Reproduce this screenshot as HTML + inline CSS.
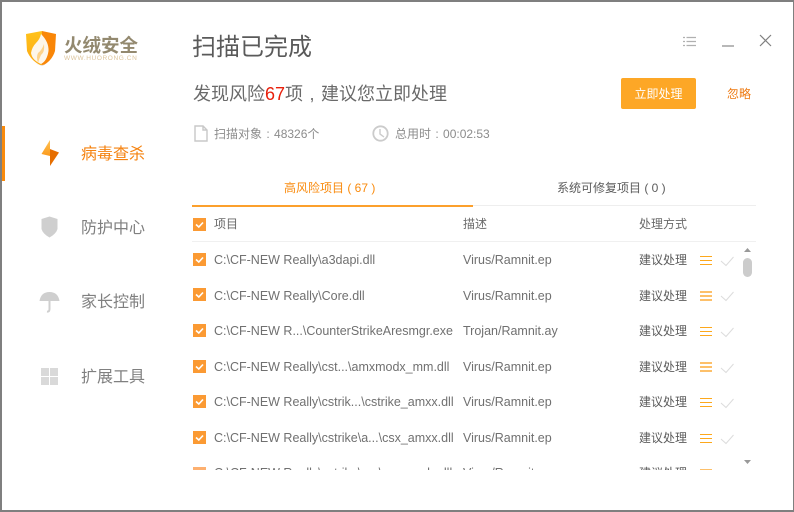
<!DOCTYPE html>
<html lang="zh"><head><meta charset="utf-8"><title>火绒安全</title>
<style>
html,body{margin:0;padding:0;background:#fff}
#w{position:relative;width:794px;height:512px;overflow:hidden;background:#fff;font-family:"Liberation Sans","Noto Sans CJK SC",sans-serif;color:#666}
.a{position:absolute;white-space:nowrap;line-height:1;filter:blur(.3px)}
.b{position:absolute;background:#7f7f7f}
.nav{left:81px;font-size:16px;color:#808080}
.cb{position:absolute;left:193px;width:13px;height:13px}
.p{left:214px;font-size:12.5px;color:#707070}
.v{left:463px;font-size:12.5px;color:#707070}
.s{left:639px;font-size:12px;color:#5c5c5c}
.ic{position:absolute;left:700px;width:40px;height:12px}
.c{display:inline-block;width:12px;text-align:center}
#list{position:absolute;left:0;top:0;width:794px;height:470px;overflow:hidden}
</style></head><body><div id="w">
<div class="b" style="left:0;top:0;width:794px;height:2px"></div>
<div class="b" style="left:0;top:0;width:2px;height:512px"></div>
<div class="b" style="right:0;top:0;width:1px;height:512px"></div>
<div class="b" style="left:0;bottom:0;width:794px;height:2px"></div>

<svg style="position:absolute;left:25px;top:30px;filter:blur(.3px)" width="32" height="37" viewBox="0 0 32 37">
<defs><linearGradient id="y" x1="0" y1="0" x2="0" y2="1"><stop offset="0" stop-color="#ffc21a"/><stop offset="1" stop-color="#fca814"/></linearGradient></defs>
<path d="M1 4 L17 1 V36 Q6 31 2 21Z" fill="url(#y)"/>
<path d="M17 1 L31 4 L30 21 Q27 31 17 36Z" fill="#f98607"/>
<path d="M16 4 Q24 12 23.500 21 Q22 31 16 34 Q7 30 6 23 Q7 17 11 13 Q15 9 16 4Z" fill="#fdf6ea"/>
<path d="M19 14 Q20 22 16 25 Q14 29 13 33 Q11 27 13 23 Q17 20 19 14Z" fill="#fdd28a"/>
<path d="M10 33 Q16 37 23 33 L17 36Z" fill="#e6e6e6"/>
</svg>
<div class="a" style="left:64px;top:37px;font-size:18.500px;font-weight:700;color:#93896f">火绒安全</div>
<div class="a" style="left:64px;top:56px;font-size:6.500px;color:#dcc49c;letter-spacing:.6px">WWW.HUORONG.CN</div>

<div class="b" style="left:2px;top:126px;width:3px;height:55px;background:#f98a0c"></div>
<svg style="position:absolute;left:40px;top:140px;filter:blur(.3px)" width="20" height="27" viewBox="0 0 20 27">
<defs><linearGradient id="g" x1="0" y1="0" x2="0" y2="1"><stop offset="0" stop-color="#ffc355"/><stop offset="1" stop-color="#fb9a1c"/></linearGradient></defs>
<path d="M10 0 L1.500 14 L10 16Z" fill="url(#g)"/>
<path d="M10 9 L19 12.500 L10 26Z" fill="#e66e00"/>
</svg>
<div class="a nav" style="top:147px;color:#f5820f">病毒查杀</div>

<svg style="position:absolute;left:41px;top:216px" width="17" height="22" viewBox="0 0 17 22"><path d="M8.500 .5 L16.500 3 V13 Q15 18 8.500 21.500 Q2 18 .5 13 V3Z" fill="#cfcfcf"/></svg>
<div class="a nav" style="top:221px">防护中心</div>

<svg style="position:absolute;left:39px;top:291px" width="21" height="22" viewBox="0 0 21 22"><path d="M.5 10 Q2 1 10.500 1 Q19 1 20.500 10Z" fill="#cfcfcf"/><path d="M10.500 9 V18 Q10.500 21 8 20.500" stroke="#cfcfcf" stroke-width="2" fill="none"/></svg>
<div class="a nav" style="top:295px">家长控制</div>

<svg style="position:absolute;left:41px;top:368px" width="17" height="17" viewBox="0 0 17 17"><g fill="#d9d9d9"><rect width="8" height="8"/><rect x="9" width="8" height="8"/><rect y="9" width="8" height="8"/><rect x="9" y="9" width="8" height="8"/></g></svg>
<div class="a nav" style="top:370px">扩展工具</div>

<div class="a" style="left:192px;top:36px;font-size:24px;color:#5a5a5a">扫描已完成</div>
<div class="a" style="left:193px;top:85px;font-size:18px;color:#6a6a6a">发现风险<span style="color:#e8200c">67</span>项<span style="display:inline-block;width:18px;text-align:center">,</span>建议您立即处理</div>

<svg style="position:absolute;left:194px;top:125px" width="14" height="17" viewBox="0 0 14 17"><path d="M1 1 H9 L13 5 V16 H1Z M9 1 V5 H13" fill="none" stroke="#c8c8c8" stroke-width="1.400"/></svg>
<div class="a" style="left:214px;top:128px;font-size:12px;color:#8c8c8c">扫描对象<span class="c">:</span>48326个</div>
<svg style="position:absolute;left:372px;top:125px" width="17" height="17" viewBox="0 0 17 17"><circle cx="8.500" cy="8.500" r="7.200" fill="none" stroke="#cbcbcb" stroke-width="1.800"/><path d="M8 4 V9 L12 12" fill="none" stroke="#cbcbcb" stroke-width="1.400"/></svg>
<div class="a" style="left:395px;top:128px;font-size:12px;color:#8c8c8c">总用时<span class="c">:</span>00:02:53</div>

<svg style="position:absolute;left:683px;top:36px" width="14" height="12" viewBox="0 0 14 12"><g stroke="#b0b0b0" stroke-width="1.200"><path d="M0 1.500H2M3.500 1.500H13M0 5.500H2M3.500 5.500H13M0 9.500H2M3.500 9.500H13"/></g></svg>
<div class="b" style="left:722px;top:45px;width:12px;height:2px;background:#b8b8b8"></div>
<svg style="position:absolute;left:759px;top:34px" width="13" height="13" viewBox="0 0 13 13"><path d="M1 1 L12 12 M12 1 L1 12" stroke="#808080" stroke-width="1.200"/></svg>

<div class="b" style="left:621px;top:78px;width:75px;height:31px;background:#fda726;border-radius:2px"></div>
<div class="a" style="left:621px;top:88px;width:75px;color:#fff;font-size:12px;text-align:center">立即处理</div>
<div class="a" style="left:727px;top:88px;font-size:12px;color:#ee7a12">忽略</div>

<div class="a" style="left:284px;top:182px;font-size:12px;color:#f98a0c">高风险项目 ( 67 )</div>
<div class="a" style="left:557px;top:182px;font-size:12px;color:#5c5c5c">系统可修复项目 ( 0 )</div>
<div class="b" style="left:192px;top:205px;width:564px;height:1px;background:#eee"></div>
<div class="b" style="left:192px;top:205px;width:281px;height:2px;background:#fca02c"></div>

<svg class="cb" style="top:218px" viewBox="0 0 13 13"><rect width="13" height="13" fill="#fb9a33"/><path d="M3 6.500 L5.800 9 L10 4.500" fill="none" stroke="#fff" stroke-width="1.600"/></svg>
<div class="a" style="left:214px;top:218px;font-size:12px;color:#6a6a6a">项目</div>
<div class="a" style="left:463px;top:218px;font-size:12px;color:#6a6a6a">描述</div>
<div class="a" style="left:639px;top:218px;font-size:12px;color:#6a6a6a">处理方式</div>
<div class="b" style="left:192px;top:241px;width:564px;height:1px;background:#f0f0f0"></div>

<div id="list">
<svg class="cb" style="top:253px" viewBox="0 0 13 13"><rect width="13" height="13" fill="#fb9a33"/><path d="M3 6.500 L5.800 9 L10 4.500" fill="none" stroke="#fff" stroke-width="1.600"/></svg>
<div class="a p" style="top:254px">C:\CF-NEW Really\a3dapi.dll</div><div class="a v" style="top:254px">Virus/Ramnit.ep</div><div class="a s" style="top:254px">建议处理</div>
<svg class="ic" style="top:255px" viewBox="0 0 40 12"><rect y="1" width="12" height="1" fill="#fda81c"/><rect y="5" width="12" height="1" fill="#fda81c"/><rect y="9" width="12" height="1" fill="#fda81c"/><path d="M21 6 L26 10.500 L33.500 2" fill="none" stroke="#dcdcdc"/></svg>

<svg class="cb" style="top:288px" viewBox="0 0 13 13"><rect width="13" height="13" fill="#fb9a33"/><path d="M3 6.500 L5.800 9 L10 4.500" fill="none" stroke="#fff" stroke-width="1.600"/></svg>
<div class="a p" style="top:290px">C:\CF-NEW Really\Core.dll</div><div class="a v" style="top:290px">Virus/Ramnit.ep</div><div class="a s" style="top:290px">建议处理</div>
<svg class="ic" style="top:290px" viewBox="0 0 40 12"><rect y="1" width="12" height="2" fill="#fdc06a"/><rect y="5" width="12" height="2" fill="#fdc06a"/><rect y="9" width="12" height="2" fill="#fdc06a"/><path d="M21 6 L26 10.500 L33.500 2" fill="none" stroke="#dcdcdc"/></svg>

<svg class="cb" style="top:324px" viewBox="0 0 13 13"><rect width="13" height="13" fill="#fb9a33"/><path d="M3 6.500 L5.800 9 L10 4.500" fill="none" stroke="#fff" stroke-width="1.600"/></svg>
<div class="a p" style="top:325px">C:\CF-NEW R...\CounterStrikeAresmgr.exe</div><div class="a v" style="top:325px">Trojan/Ramnit.ay</div><div class="a s" style="top:325px">建议处理</div>
<svg class="ic" style="top:326px" viewBox="0 0 40 12"><rect y="1" width="12" height="1" fill="#fda81c"/><rect y="5" width="12" height="1" fill="#fda81c"/><rect y="9" width="12" height="1" fill="#fda81c"/><path d="M21 6 L26 10.500 L33.500 2" fill="none" stroke="#dcdcdc"/></svg>

<svg class="cb" style="top:360px" viewBox="0 0 13 13"><rect width="13" height="13" fill="#fb9a33"/><path d="M3 6.500 L5.800 9 L10 4.500" fill="none" stroke="#fff" stroke-width="1.600"/></svg>
<div class="a p" style="top:361px">C:\CF-NEW Really\cst...\amxmodx_mm.dll</div><div class="a v" style="top:361px">Virus/Ramnit.ep</div><div class="a s" style="top:361px">建议处理</div>
<svg class="ic" style="top:362px" viewBox="0 0 40 12"><rect y="0" width="12" height="2" fill="#fdc06a"/><rect y="4" width="12" height="2" fill="#fdc06a"/><rect y="8" width="12" height="2" fill="#fdc06a"/><path d="M21 6 L26 10.500 L33.500 2" fill="none" stroke="#dcdcdc"/></svg>

<svg class="cb" style="top:395px" viewBox="0 0 13 13"><rect width="13" height="13" fill="#fb9a33"/><path d="M3 6.500 L5.800 9 L10 4.500" fill="none" stroke="#fff" stroke-width="1.600"/></svg>
<div class="a p" style="top:396px">C:\CF-NEW Really\cstrik...\cstrike_amxx.dll</div><div class="a v" style="top:396px">Virus/Ramnit.ep</div><div class="a s" style="top:396px">建议处理</div>
<svg class="ic" style="top:397px" viewBox="0 0 40 12"><rect y="1" width="12" height="1" fill="#fda81c"/><rect y="5" width="12" height="1" fill="#fda81c"/><rect y="9" width="12" height="1" fill="#fda81c"/><path d="M21 6 L26 10.500 L33.500 2" fill="none" stroke="#dcdcdc"/></svg>

<svg class="cb" style="top:431px" viewBox="0 0 13 13"><rect width="13" height="13" fill="#fb9a33"/><path d="M3 6.500 L5.800 9 L10 4.500" fill="none" stroke="#fff" stroke-width="1.600"/></svg>
<div class="a p" style="top:432px">C:\CF-NEW Really\cstrike\a...\csx_amxx.dll</div><div class="a v" style="top:432px">Virus/Ramnit.ep</div><div class="a s" style="top:432px">建议处理</div>
<svg class="ic" style="top:433px" viewBox="0 0 40 12"><rect y="1" width="12" height="1" fill="#fda81c"/><rect y="5" width="12" height="1" fill="#fda81c"/><rect y="9" width="12" height="1" fill="#fda81c"/><path d="M21 6 L26 10.500 L33.500 2" fill="none" stroke="#dcdcdc"/></svg>

<svg class="cb" style="top:467px" viewBox="0 0 13 13"><rect width="13" height="13" fill="#fdb070"/></svg>
<div class="a p" style="top:467px">C:\CF-NEW Really\cstrike\a...\amxmodx.dll</div><div class="a v" style="top:467px">Virus/Ramnit.ep</div><div class="a s" style="top:467px">建议处理</div>
<svg class="ic" style="top:468px" viewBox="0 0 40 12"><rect y="1" width="12" height="2" fill="#fdc06a"/></svg>
</div>

<svg style="position:absolute;left:743px;top:247px" width="9" height="6" viewBox="0 0 9 6"><path d="M4.500 1 L8 5 H1Z" fill="#999"/></svg>
<div class="b" style="left:743px;top:258px;width:9px;height:19px;border-radius:4.500px;background:#ccc"></div>
<svg style="position:absolute;left:743px;top:459px" width="9" height="6" viewBox="0 0 9 6"><path d="M1 1 H8 L4.500 5Z" fill="#999"/></svg>
</div></body></html>
